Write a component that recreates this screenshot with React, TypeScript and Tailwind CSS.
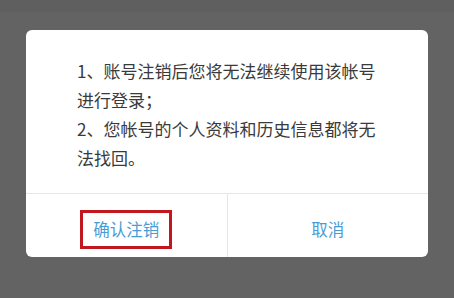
import React from "react";

export default function App() {
  return (
    <div
      className="w-[454px] h-[298px] bg-[#636363] flex flex-col overflow-hidden"
      style={{ fontFamily: '"Noto Sans CJK SC", "Noto Sans", sans-serif' }}
    >
      <div className="h-[12px] bg-[#5f5f5f] shrink-0" />
      <div className="mt-[18px] ml-[26px] w-[402px] bg-white rounded-[6px] flex flex-col overflow-hidden">
        <div className="pt-[26px] pb-[21px] pl-[51px] pr-[50px] text-[17px] leading-[29px] text-[#3a3a3a]">
          <p>1、账号注销后您将无法继续使用该帐号进行登录；</p>
          <p>2、您帐号的个人资料和历史信息都将无法找回。</p>
        </div>
        <div className="h-px bg-[#e6e6e6]" />
        <div className="flex h-[63px]">
          <div className="flex-1 flex justify-center pt-[16px] border-r border-[#e6e6e6]">
            <span className="inline-block h-[39px] px-[10px] border-[3px] border-[#c0181e] text-[16.5px] leading-[33px] text-[#4a9dd4]">
              确认注销
            </span>
          </div>
          <div className="flex-1 flex justify-center pt-[16px]">
            <span className="inline-block h-[39px] px-[10px] border-[3px] border-transparent text-[16.5px] leading-[33px] text-[#4a9dd4]">
              取消
            </span>
          </div>
        </div>
      </div>
    </div>
  );
}
